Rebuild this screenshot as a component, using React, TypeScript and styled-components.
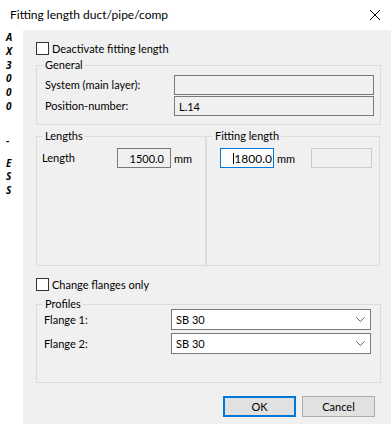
import React from "react";
import styled, { createGlobalStyle } from "styled-components";

const GlobalStyle = createGlobalStyle`
  html, body { margin: 0; padding: 0; background: #ffffff; }
  body { font-family: Lato, "Noto Sans", sans-serif; color: #000; }
  * { box-sizing: border-box; }
`;

const Window = styled.div`
  width: 391px;
  height: 424px;
  display: flex;
  flex-direction: column;
  overflow: hidden;
  background: #fff;
`;

const TitleBar = styled.div`
  height: 30px;
  flex: none;
  display: flex;
  align-items: center;
  justify-content: space-between;
  padding: 0 11px 0 10px;
  background: #fff;
`;

const TitleText = styled.span`
  font-size: 12px;
  line-height: 16px;
  color: #000;
`;

const CloseIcon = styled.svg`
  width: 10px;
  height: 10px;
  display: block;
`;

const Body = styled.div`
  flex: 1;
  display: flex;
  min-height: 0;
`;

const SideStrip = styled.div`
  width: 23px;
  flex: none;
  background: #fff;
  display: flex;
  flex-direction: column;
  padding: 1px 0 0 6px;
`;

const SideLetter = styled.span<{ $mt?: number }>`
  font-family: "Open Sans", sans-serif;
  font-weight: 700;
  font-style: italic;
  font-size: 10px;
  line-height: 13.8px;
  height: 13.8px;
  margin-top: ${(p) => p.$mt ?? 0}px;
`;

const Panel = styled.div`
  flex: 1;
  background: #f0f0f0;
  display: flex;
  flex-direction: column;
  align-items: stretch;
  padding: 12px 10px 0 13px;
`;

const CheckRow = styled.label<{ $mt?: number }>`
  display: flex;
  flex: none;
  align-items: center;
  gap: 3px;
  height: 13px;
  font-size: 11px;
  margin-top: ${(p) => p.$mt ?? 0}px;
`;

const CheckBox = styled.span`
  width: 13px;
  height: 13px;
  flex: none;
  border: 1px solid #333333;
  background: #ffffff;
`;

const GroupBox = styled.div<{
  $mt?: number;
  $pad: string;
  $width?: number;
  $mr?: number;
  $grow?: boolean;
}>`
  position: relative;
  border: 1px solid #dcdcdc;
  margin-top: ${(p) => p.$mt ?? 0}px;
  margin-right: ${(p) => p.$mr ?? 0}px;
  padding: ${(p) => p.$pad};
  flex: ${(p) => (p.$grow ? "1 1 auto" : "none")};
  ${(p) => (p.$width ? `width: ${p.$width}px;` : "")}
`;

const Caption = styled.span`
  position: absolute;
  top: -8px;
  left: 6px;
  padding: 0 2px;
  background: #f0f0f0;
  font-size: 11px;
  line-height: 14px;
`;

const FormGrid = styled.div<{ $labelWidth: number; $rowGap: number }>`
  display: grid;
  grid-template-columns: ${(p) => p.$labelWidth}px 1fr;
  row-gap: ${(p) => p.$rowGap}px;
  align-items: center;
`;

const Label = styled.span`
  font-size: 11px;
  line-height: 14px;
  white-space: nowrap;
`;

const ReadBox = styled.div`
  height: 20px;
  border: 1px solid #7a7a7a;
  background: #f0f0f0;
  padding: 0 4px;
  display: flex;
  align-items: center;
  font-size: 11px;
`;

const LengthsRow = styled.div`
  display: flex;
  flex: none;
  height: 130px;
  margin-top: 11px;
`;

const FieldRow = styled.div`
  display: flex;
  align-items: center;
`;

const LabelCell = styled.span`
  width: 75px;
  flex: none;
  font-size: 11px;
  line-height: 14px;
`;

const NumBox = styled.div<{ $active?: boolean }>`
  width: 54px;
  height: 20px;
  flex: none;
  display: flex;
  align-items: center;
  justify-content: flex-end;
  border: 1px solid ${(p) => (p.$active ? "#0078d7" : "#7a7a7a")};
  background: ${(p) => (p.$active ? "#ffffff" : "#f0f0f0")};
  padding-right: ${(p) => (p.$active ? 1 : 6)}px;
  font-size: ${(p) => (p.$active ? 12 : 11)}px;
`;

const Caret = styled.span`
  width: 1px;
  height: 11px;
  background: #000;
`;

const Unit = styled.span`
  font-size: 11px;
  margin-left: 3px;
`;

const DisabledBox = styled.div`
  width: 61px;
  height: 20px;
  margin-left: auto;
  border: 1px solid #cccccc;
  background: #f0f0f0;
`;

const SelectBox = styled.div`
  height: 21px;
  border: 1px solid #7a7a7a;
  background: #ffffff;
  display: flex;
  align-items: center;
  justify-content: space-between;
  padding: 0 5px 0 4px;
  font-size: 11px;
`;

const Chevron = styled.svg`
  width: 9px;
  height: 5px;
  display: block;
`;

const ButtonRow = styled.div`
  display: flex;
  flex: none;
  justify-content: flex-end;
  gap: 6px;
  margin-top: 13px;
  padding-right: 6px;
`;

const Button = styled.button<{ $default?: boolean }>`
  width: 73px;
  height: 21px;
  padding: 0;
  margin: 0;
  font-family: Lato, "Noto Sans", sans-serif;
  font-size: 11px;
  color: #000;
  background: #e1e1e1;
  border: ${(p) => (p.$default ? "2px solid #0078d7" : "1px solid #adadad")};
  border-radius: 0;
`;

const sideLetters: Array<[string, number]> = [
  ["A", 0],
  ["X", 0],
  ["3", 0],
  ["0", 0],
  ["0", 0],
  ["0", 0],
  ["-", 20],
  ["E", 9],
  ["S", 0],
  ["S", 0],
];

const ChevronDown = () => (
  <Chevron viewBox="0 0 9 5">
    <path d="M0.5 0.5 L4.5 4.5 L8.5 0.5" fill="none" stroke="#606060" strokeWidth="1" />
  </Chevron>
);

export default function App() {
  return (
    <>
      <GlobalStyle />
      <Window>
        <TitleBar>
          <TitleText>Fitting length duct/pipe/comp</TitleText>
          <CloseIcon viewBox="0 0 10 10">
            <path d="M0 0 L10 10 M10 0 L0 10" stroke="#000" strokeWidth="1" />
          </CloseIcon>
        </TitleBar>
        <Body>
          <SideStrip>
            {sideLetters.map(([ch, mt], i) => (
              <SideLetter key={i} $mt={mt}>
                {ch}
              </SideLetter>
            ))}
          </SideStrip>
          <Panel>
            <CheckRow>
              <CheckBox />
              Deactivate fitting length
            </CheckRow>

            <GroupBox $mt={10} $pad="9px 6px 8px 8px">
              <Caption>General</Caption>
              <FormGrid $labelWidth={129} $rowGap={1}>
                <Label>System (main layer):</Label>
                <ReadBox />
                <Label>Position-number:</Label>
                <ReadBox>L.14</ReadBox>
              </FormGrid>
            </GroupBox>

            <LengthsRow>
              <GroupBox $width={170} $pad="11px 5px 0 5px">
                <Caption>Lengths</Caption>
                <FieldRow>
                  <LabelCell>Length</LabelCell>
                  <NumBox>1500.0</NumBox>
                  <Unit>mm</Unit>
                </FieldRow>
              </GroupBox>
              <GroupBox $grow $pad="11px 7px 0 13px" $mr={1}>
                <Caption>Fitting length</Caption>
                <FieldRow>
                  <NumBox $active>
                    <Caret />
                    1800.0
                  </NumBox>
                  <Unit>mm</Unit>
                  <DisabledBox />
                </FieldRow>
              </GroupBox>
            </LengthsRow>

            <CheckRow $mt={12}>
              <CheckBox />
              Change flanges only
            </CheckRow>

            <GroupBox $mt={13} $pad="4px 9px 28px 7px">
              <Caption>Profiles</Caption>
              <FormGrid $labelWidth={127} $rowGap={3}>
                <Label>Flange 1:</Label>
                <SelectBox>
                  SB 30
                  <ChevronDown />
                </SelectBox>
                <Label>Flange 2:</Label>
                <SelectBox>
                  SB 30
                  <ChevronDown />
                </SelectBox>
              </FormGrid>
            </GroupBox>

            <ButtonRow>
              <Button $default>OK</Button>
              <Button>Cancel</Button>
            </ButtonRow>
          </Panel>
        </Body>
      </Window>
    </>
  );
}
